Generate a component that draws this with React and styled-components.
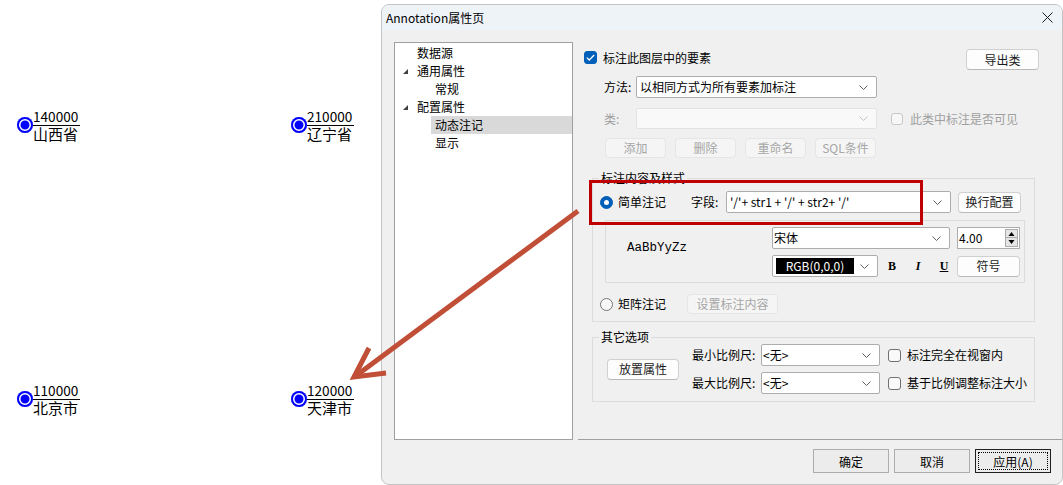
import React from 'react'
import styled, { createGlobalStyle } from 'styled-components'

const ui = `"Noto Sans CJK SC", "Noto Sans", sans-serif`

const GlobalStyle = createGlobalStyle`
  html, body {
    margin: 0;
    padding: 0;
    background: #fff;
  }
  body {
    font-family: ${ui};
  }
`

const features = [
  { code: '140000', name: '山西省', x: 17, y: 112 },
  { code: '210000', name: '辽宁省', x: 291, y: 112 },
  { code: '110000', name: '北京市', x: 17, y: 386 },
  { code: '120000', name: '天津市', x: 291, y: 386 },
]

const treeItems = [
  { label: '数据源', level: 0 },
  { label: '通用属性', level: 0, open: true },
  { label: '常规', level: 1 },
  { label: '配置属性', level: 0, open: true },
  { label: '动态注记', level: 1, selected: true },
  { label: '显示', level: 1 },
]

/* ---------- map canvas ---------- */

const Desktop = styled.div`
  position: relative;
  width: 1063px;
  height: 485px;
  overflow: hidden;
  background: #fff;
`

const Feature = styled.div`
  position: absolute;
  left: ${p => p.$x}px;
  top: ${p => p.$y}px;
  display: flex;
  align-items: flex-start;
`

const Marker = styled.span`
  width: 16px;
  height: 16px;
  margin-top: 5px;
  border-radius: 50%;
  background: #0000ff;
  box-shadow: inset 0 0 0 2px #0000ff, inset 0 0 0 3.5px #fff;
  flex: none;
`

const FeatureText = styled.div`
  display: flex;
  flex-direction: column;
  color: #000;
`

/* code sits on the rule with a little air, like the label renderer does */
const Code = styled.span`
  display: block;
  font-family: "Noto Sans CJK SC", sans-serif;
  font-size: 13.6px;
  line-height: 8px;
  height: 8px;
  padding: 0 0 5px;
  overflow: visible;
`

const Name = styled.span`
  font-family: "Noto Sans CJK SC", sans-serif;
  font-size: 15px;
  line-height: 15px;
  border-top: 1px solid #000;
  padding-right: 2px;
`

/* ---------- dialog window ---------- */

const Window = styled.div`
  position: absolute;
  left: 381px;
  top: 4px;
  width: 682px;
  height: 481px;
  box-sizing: border-box;
  border: 1px solid #c4c4c4;
  border-radius: 8px;
  background: #f0f0f0;
  overflow: hidden;
  display: flex;
  flex-direction: column;
  font-family: ${ui};
  font-size: 12px;
  line-height: 16px;
  color: #000;
`

const TitleBar = styled.div`
  height: 25px;
  flex: none;
  display: flex;
  align-items: center;
  padding: 0 9px 0 4px;
  background: #eef3f8;
`

const Title = styled.span`
  flex: 1;
  font-size: 12px;
`

const Body = styled.div`
  display: flex;
  padding: 12px 0 0 12px;
  flex: none;
`

const Tree = styled.div`
  width: 179px;
  height: 398px;
  box-sizing: border-box;
  border: 1px solid #a0a0a0;
  background: #fff;
  padding-top: 1px;
  flex: none;
`

const TreeRow = styled.div`
  display: flex;
  align-items: center;
  height: 18px;
  padding-left: ${p => p.$level * 18}px;
`

const Twisty = styled.span`
  width: 18px;
  height: 18px;
  box-sizing: border-box;
  padding-left: 8px;
  display: flex;
  align-items: center;
  flex: none;
`

const TreeLabel = styled.span`
  flex: ${p => (p.$selected ? 1 : 'none')};
  height: 18px;
  line-height: 18px;
  padding: 0 4px;
  background: ${p => (p.$selected ? '#d9d9d9' : 'transparent')};
`

const Page = styled.div`
  flex: 1;
  height: 398px;
  margin-left: 5px;
  box-sizing: border-box;
  border-bottom: 1px solid #a0a0a0;
  padding: 7px 0 0 6px;
  display: flex;
  flex-direction: column;
`

const TopRow = styled.div`
  display: flex;
  align-items: flex-start;
  height: 21px;
  padding-right: 23px;
`

const CheckLabel = styled.label`
  flex: 1;
  display: flex;
  align-items: center;
  height: 13px;
  margin-top: 2px;
  line-height: 13px;
`

const CheckBox = styled.span`
  width: ${p => (p.$disabled ? 12 : 13)}px;
  height: ${p => (p.$disabled ? 12 : 13)}px;
  box-sizing: border-box;
  border-radius: 3px;
  flex: none;
  margin-left: ${p => p.$ml || 0}px;
  margin-right: ${p => p.$mr || 6}px;
  display: flex;
  align-items: center;
  justify-content: center;
  background: ${p => (p.$checked ? '#005fb8' : p.$disabled ? '#f7f7f7' : '#f9f9f9')};
  border: 1px solid ${p => (p.$checked ? '#005fb8' : p.$disabled ? '#c8c8c8' : '#6f6f6f')};
`

const Button = styled.button`
  box-sizing: border-box;
  width: ${p => p.$w}px;
  height: ${p => p.$h || 21}px;
  margin-left: ${p => p.$ml || 0}px;
  padding: 0;
  flex: none;
  font-family: ${ui};
  font-size: 12px;
  line-height: 14px;
  color: ${p => (p.disabled ? '#a6a6a6' : '#1b1b1b')};
  background: ${p => (p.disabled ? '#f5f5f5' : '#fdfdfd')};
  border: 1px solid ${p => (p.disabled ? '#e5e5e5' : '#d0d0d0')};
  border-bottom-color: ${p => (p.disabled ? '#e5e5e5' : '#b9b9b9')};
  border-radius: 4px;
`

const FieldRow = styled.div`
  display: flex;
  align-items: center;
  margin-top: ${p => p.$mt || 0}px;
  padding-left: ${p => p.$pl || 0}px;
  height: ${p => p.$h || 22}px;
  color: ${p => (p.$muted ? '#a0a0a0' : '#000')};
`

const FieldLabel = styled.span`
  width: ${p => p.$w}px;
  margin-left: ${p => p.$ml || 0}px;
  flex: none;
  white-space: nowrap;
`

const Combo = styled.div`
  box-sizing: border-box;
  width: ${p => p.$w}px;
  height: ${p => p.$h || 22}px;
  margin-left: ${p => p.$ml || 0}px;
  flex: none;
  display: flex;
  align-items: center;
  background: ${p => (p.$disabled ? '#f9f9f9' : '#fff')};
  border: 1px solid ${p => (p.$disabled ? '#e3e3e3' : '#adadad')};
  border-radius: 2px;
  color: #000;
`

const ComboText = styled.span`
  flex: 1;
  padding-left: ${p => p.$pl ?? 3}px;
  white-space: nowrap;
  overflow: hidden;
`

const Chevron = ({ muted }) => (
  <svg width="9" height="5" viewBox="0 0 9 5" style={{ marginRight: 8, flex: 'none' }}>
    <path d="M0.5 0.5 L4.5 4.5 L8.5 0.5" fill="none" stroke={muted ? '#c3c3c3' : '#606060'} strokeWidth="1" />
  </svg>
)

const GroupBox = styled.fieldset`
  margin: ${p => p.$mt}px 27px 0 8px;
  padding: ${p => p.$pad};
  border: 1px solid #dcdcdc;
  min-width: 0;
`

/* the legend sits relative to the padding edge, so pull it back to the frame */
const Legend = styled.legend`
  margin-left: ${p => p.$ml}px;
  padding: 0 2px;
  font-size: 12px;
  line-height: 14px;
`

const Radio = styled.span`
  width: 13px;
  height: 13px;
  box-sizing: border-box;
  border-radius: 50%;
  flex: none;
  margin-right: 5px;
  display: flex;
  align-items: center;
  justify-content: center;
  background: ${p => (p.$checked ? '#005fb8' : '#f7f7f7')};
  border: 1px solid ${p => (p.$checked ? '#005fb8' : '#767676')};

  &::after {
    content: '';
    display: ${p => (p.$checked ? 'block' : 'none')};
    width: 5px;
    height: 5px;
    border-radius: 50%;
    background: #fff;
  }
`

const InnerBox = styled.div`
  display: flex;
  height: 63px;
  box-sizing: border-box;
  margin: 7px 9px 0 5px;
  border: 1px solid #dcdcdc;
`

const Sample = styled.div`
  width: 166px;
  flex: none;
  box-sizing: border-box;
  padding: 20px 0 0 21px;
  font-family: "Liberation Mono", monospace;
  font-size: 12.5px;
  line-height: 14px;
`

const Controls = styled.div`
  display: flex;
  flex-direction: column;
  gap: 6px;
  padding-top: 6px;
`

const ControlRow = styled.div`
  display: flex;
  align-items: center;
`

const SpinBox = styled.div`
  box-sizing: border-box;
  width: 63px;
  height: 22px;
  margin-left: 7px;
  display: flex;
  align-items: center;
  background: #fff;
  border: 1px solid #adadad;
`

const SpinValue = styled.span`
  flex: 1;
  padding-left: 1px;
`

const SpinButtons = styled.div`
  display: flex;
  flex-direction: column;
  margin-right: 1px;
`

const SpinButton = styled.span`
  width: 13px;
  height: 9px;
  box-sizing: border-box;
  display: flex;
  align-items: center;
  justify-content: center;
  background: #e5e5e5;
  border: 1px solid #acacac;
  & + & {
    border-top: none;
  }
`

const ColorCombo = styled(Combo)`
  padding-left: 3px;
`

const Swatch = styled.span`
  flex: 1;
  height: 16px;
  margin-right: 6px;
  background: #000;
  color: #fff;
  text-align: center;
  line-height: 16px;
  font-size: 12px;
`

const Glyph = styled.span`
  width: 26px;
  flex: none;
  margin-left: ${p => p.$ml || 0}px;
  text-align: center;
  font-family: "Liberation Serif", serif;
  font-weight: bold;
  font-size: 12px;
  font-style: ${p => (p.$italic ? 'italic' : 'normal')};
  text-decoration: ${p => (p.$underline ? 'underline' : 'none')};
`

const PlaceRow = styled.div`
  display: flex;
  align-items: center;
`

const ScaleGrid = styled.div`
  display: grid;
  grid-template-columns: 69px 119px auto;
  grid-auto-rows: 22px;
  row-gap: 6px;
  align-items: center;
  margin-left: 13px;
`

const Footer = styled.div`
  flex: 1;
  display: flex;
  justify-content: flex-end;
  align-items: flex-start;
  gap: 5px;
  padding: 9px 11px 0 0;
`

const DialogButton = styled.button`
  box-sizing: border-box;
  width: 76px;
  height: 24px;
  padding: 0;
  font-family: ${ui};
  font-size: 12px;
  color: #000;
  background: #ececec;
  border: 1px solid ${p => (p.$default ? '#202020' : '#adadad')};
  outline: ${p => (p.$default ? '1px dotted #000' : 'none')};
  outline-offset: -4px;
`

/* ---------- annotation overlays ---------- */

const Highlight = styled.div`
  position: absolute;
  left: 589px;
  top: 180px;
  width: 334px;
  height: 45px;
  box-sizing: border-box;
  border: 3px solid #c00000;
`

const ArrowLayer = styled.svg`
  position: absolute;
  left: 0;
  top: 0;
  pointer-events: none;
`

const Check = () => (
  <svg width="9" height="7" viewBox="0 0 9 7">
    <path d="M0.8 3.6 L3.2 6 L8.2 1" fill="none" stroke="#fff" strokeWidth="1.3" />
  </svg>
)

const Tri = ({ down }) => (
  <svg width="7" height="4" viewBox="0 0 7 4">
    <path d={down ? 'M0.5 0 L6.5 0 L3.5 4 Z' : 'M0.5 4 L6.5 4 L3.5 0 Z'} fill="#000" />
  </svg>
)

export default function App() {
  return (
    <Desktop>
      <GlobalStyle />

      {features.map(f => (
        <Feature key={f.code} $x={f.x} $y={f.y}>
          <Marker />
          <FeatureText>
            <Code>{f.code}</Code>
            <Name>{f.name}</Name>
          </FeatureText>
        </Feature>
      ))}

      <Window>
        <TitleBar>
          <Title>Annotation属性页</Title>
          <svg width="11" height="11" viewBox="0 0 11 11">
            <path d="M0.5 0.5 L10.5 10.5 M10.5 0.5 L0.5 10.5" stroke="#1a1a1a" strokeWidth="1" />
          </svg>
        </TitleBar>

        <Body>
          <Tree>
            {treeItems.map(item => (
              <TreeRow key={item.label} $level={item.level}>
                <Twisty>
                  {item.open && (
                    <svg width="5" height="5" viewBox="0 0 5 5">
                      <path d="M5 0 L5 5 L0 5 Z" fill="#404040" />
                    </svg>
                  )}
                </Twisty>
                <TreeLabel $selected={item.selected}>{item.label}</TreeLabel>
              </TreeRow>
            ))}
          </Tree>

          <Page>
            <TopRow>
              <CheckLabel>
                <CheckBox $checked><Check /></CheckBox>
                标注此图层中的要素
              </CheckLabel>
              <Button $w={73}>导出类</Button>
            </TopRow>

            <FieldRow $mt={6} $pl={20}>
              <FieldLabel $w={32}>方法:</FieldLabel>
              <Combo $w={241}>
                <ComboText>以相同方式为所有要素加标注</ComboText>
                <Chevron />
              </Combo>
            </FieldRow>

            <FieldRow $mt={10} $pl={20} $h={21} $muted>
              <FieldLabel $w={32}>类:</FieldLabel>
              <Combo $w={241} $h={21} $disabled>
                <ComboText />
                <Chevron muted />
              </Combo>
              <CheckBox $disabled $ml={14} $mr={7} />
              此类中标注是否可见
            </FieldRow>

            <FieldRow $mt={9} $pl={21} $h={20}>
              <Button $w={61} $h={20} disabled>添加</Button>
              <Button $w={61} $h={20} $ml={9} disabled>删除</Button>
              <Button $w={61} $h={20} $ml={9} disabled>重命名</Button>
              <Button $w={61} $h={20} $ml={9} disabled>SQL条件</Button>
            </FieldRow>

            <GroupBox $mt={13} $pad="6px 0 7px 7px">
              <Legend $ml={-1}>标注内容及样式</Legend>
              <FieldRow>
                <Radio $checked />
                <FieldLabel $w={48}>简单注记</FieldLabel>
                <FieldLabel $w={35} $ml={25}>字段:</FieldLabel>
                <Combo $w={225}>
                  <ComboText>'/'+ str1 + '/' + str2+ '/'</ComboText>
                  <Chevron />
                </Combo>
                <Button $w={63} $ml={7}>换行配置</Button>
              </FieldRow>

              <InnerBox>
                <Sample>AaBbYyZz</Sample>
                <Controls>
                  <ControlRow>
                    <Combo $w={178}>
                      <ComboText $pl={1}>宋体</ComboText>
                      <Chevron />
                    </Combo>
                    <SpinBox>
                      <SpinValue>4.00</SpinValue>
                      <SpinButtons>
                        <SpinButton><Tri /></SpinButton>
                        <SpinButton><Tri down /></SpinButton>
                      </SpinButtons>
                    </SpinBox>
                  </ControlRow>
                  <ControlRow>
                    <ColorCombo $w={106}>
                      <Swatch>RGB(0,0,0)</Swatch>
                      <Chevron />
                    </ColorCombo>
                    <Glyph $ml={1}>B</Glyph>
                    <Glyph $italic>I</Glyph>
                    <Glyph $underline>U</Glyph>
                    <Button $w={63}>符号</Button>
                  </ControlRow>
                </Controls>
              </InnerBox>

              <FieldRow $mt={11} $h={20}>
                <Radio />
                <FieldLabel $w={48}>矩阵注记</FieldLabel>
                <Button $w={91} $h={20} $ml={21} disabled>设置标注内容</Button>
              </FieldRow>
            </GroupBox>

            <GroupBox $mt={8} $pad="0 0 7px 14px">
              <Legend $ml={-8}>其它选项</Legend>
              <PlaceRow>
                <Button $w={72}>放置属性</Button>
                <ScaleGrid>
                  <span>最小比例尺:</span>
                  <Combo $w={119}>
                    <ComboText $pl={1}>&lt;无&gt;</ComboText>
                    <Chevron />
                  </Combo>
                  <FieldRow>
                    <CheckBox $ml={8} />
                    标注完全在视窗内
                  </FieldRow>
                  <span>最大比例尺:</span>
                  <Combo $w={119}>
                    <ComboText $pl={1}>&lt;无&gt;</ComboText>
                    <Chevron />
                  </Combo>
                  <FieldRow>
                    <CheckBox $ml={8} />
                    基于比例调整标注大小
                  </FieldRow>
                </ScaleGrid>
              </PlaceRow>
            </GroupBox>
          </Page>
        </Body>

        <Footer>
          <DialogButton>确定</DialogButton>
          <DialogButton>取消</DialogButton>
          <DialogButton $default>应用(A)</DialogButton>
        </Footer>
      </Window>

      <Highlight />

      <ArrowLayer width="1063" height="485" viewBox="0 0 1063 485">
        <g stroke="#c14e37" strokeWidth="5" fill="none" strokeLinejoin="miter">
          <line x1="578" y1="211" x2="357" y2="375" />
          <polyline points="369,348 354,377 386,373" />
        </g>
      </ArrowLayer>
    </Desktop>
  )
}
